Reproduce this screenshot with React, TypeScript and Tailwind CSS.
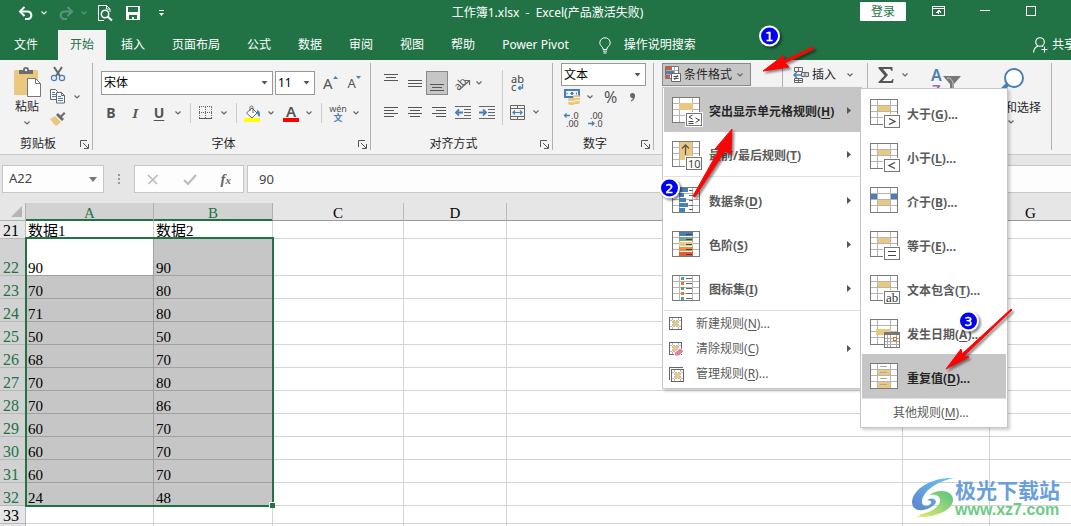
import { Fragment } from "react";
import type { ReactNode } from "react";

const uiFont = "font-['Noto_Sans','Noto_Sans_CJK_SC',sans-serif]";
const cellFont = "font-['Liberation_Serif','Noto_Sans_CJK_SC',serif]";

/* ---------- data ---------- */
const tabs = ["插入", "页面布局", "公式", "数据", "审阅", "视图", "帮助", "Power Pivot"];

const rows: [number, string, string][] = [
  [21, "数据1", "数据2"],
  [22, "90", "90"],
  [23, "70", "80"],
  [24, "71", "80"],
  [25, "50", "50"],
  [26, "68", "70"],
  [27, "70", "80"],
  [28, "70", "86"],
  [29, "60", "70"],
  [30, "60", "70"],
  [31, "60", "70"],
  [32, "24", "48"],
  [33, "", ""],
  [34, "", ""],
];

/* ---------- small shared pieces ---------- */
function Svg({
  w,
  h,
  children,
  crisp,
}: {
  w: number;
  h: number;
  children: ReactNode;
  crisp?: boolean;
}) {
  return (
    <svg
      width={w}
      height={h}
      viewBox={`0 0 ${w} ${h}`}
      fill="none"
      className="block shrink-0 overflow-visible"
      shapeRendering={crisp ? "crispEdges" : undefined}
      aria-hidden="true"
    >
      {children}
    </svg>
  );
}

function Chevron({ color = "#666" }: { color?: string }) {
  return (
    <Svg w={6} h={4}>
      <path d="M.5.5 3 3 5.5.5" stroke={color} strokeWidth="1.2" />
    </Svg>
  );
}

function Down({ color = "#555" }: { color?: string }) {
  return (
    <Svg w={7} h={4}>
      <path d="M.5 0h6L3.500 3.500z" fill={color} />
    </Svg>
  );
}

function IconButton({
  label,
  children,
  className = "",
}: {
  label: string;
  children: ReactNode;
  className?: string;
}) {
  return (
    <button
      type="button"
      aria-label={label}
      className={`flex h-6 shrink-0 items-center justify-center ${className}`}
    >
      {children}
    </button>
  );
}

function Group({
  label,
  launcher,
  className,
  children,
}: {
  label?: string;
  launcher?: boolean;
  className: string;
  children: ReactNode;
}) {
  return (
    <section
      className={`flex h-[87px] shrink-0 flex-col border-r border-[#b1b1b1] ${className}`}
    >
      <div className="flex-1">{children}</div>
      <div className="flex h-3 items-center">
        <span className={`flex-1 text-center leading-3 ${launcher ? "pr-1" : ""}`}>
          {label}
        </span>
        {launcher && (
          <button type="button" aria-label={`${label}设置`} className="mr-[3px]">
            <Svg w={9} h={9}>
              <path d="M.5 7V.5H7M3 3l5 5M8.500 4v4.500H4" stroke="#555" />
            </Svg>
          </button>
        )}
      </div>
    </section>
  );
}

function AlignLines({ lines }: { lines: [number, number][] }) {
  return (
    <Svg w={14} h={lines.length * 3 - 2} crisp>
      {lines.map(([x, w], i) => (
        <rect key={i} x={x} y={i * 3} width={w} height="1" fill="#555" />
      ))}
    </Svg>
  );
}

const barWide: [number, number][] = [[0, 14], [0, 14], [0, 14]];
const barTop: [number, number][] = [[0, 14], [2, 10], [0, 14]];

/* ---------- title bar ---------- */
function TitleBar() {
  return (
    <header className="flex h-[30px] shrink-0 items-start text-white">
      <div className="flex h-[26px] w-[235px] shrink-0 items-center pl-[18px]">
        <button type="button" aria-label="撤消" className="mr-[7px]">
          <Svg w={16} h={15}>
            <path d="M2 5.500h8a4 3.800 0 0 1 0 7.500H7" stroke="#fff" strokeWidth="2" />
            <path d="M6.500 1 2 5.500 6.500 10" stroke="#fff" strokeWidth="2" />
          </Svg>
        </button>
        <Chevron color="#fff" />
        <button type="button" aria-label="恢复" className="mr-[7px] ml-[11px]">
          <Svg w={16} h={15}>
            <path d="M14 5.500H6A4 3.800 0 0 0 6 13h3" stroke="#57967a" strokeWidth="2" />
            <path d="M9.500 1 14 5.500 9.500 10" stroke="#57967a" strokeWidth="2" />
          </Svg>
        </button>
        <Chevron color="#57967a" />
        <button type="button" aria-label="打印预览" className="ml-[11px]">
          <Svg w={15} h={17}>
            <path d="M6 15.500H.500V.500h8l3.500 3.500v3M8.500.500V4H12" stroke="#fff" />
            <circle cx="7" cy="9" r="3.700" stroke="#fff" strokeWidth="1.500" />
            <path d="m9.500 11.500 4.500 4" stroke="#fff" strokeWidth="2" />
          </Svg>
        </button>
        <button type="button" aria-label="保存" className="ml-[13px]">
          <Svg w={14} h={14} crisp>
            <path
              fillRule="evenodd"
              d="M0 0h14v14H0zM2 1v5h10V1zM3 9v4h3v-2h2v2h3V9z"
              fill="#fff"
            />
          </Svg>
        </button>
        <button type="button" aria-label="自定义快速访问工具栏" className="ml-[19px]">
          <Svg w={5} h={7}>
            <path d="M0 .5h5" stroke="#fff" />
            <path d="M0 3h5L2.500 6z" fill="#fff" />
          </Svg>
        </button>
      </div>
      <h1 className="flex-1 text-center leading-[26px] font-normal whitespace-pre">
        工作簿1.xlsx  -  Excel(产品激活失败)
      </h1>
      <div className="flex w-[211px] shrink-0 items-start pt-[2px]">
        <button
          type="button"
          className="h-[19px] w-[46px] rounded-[1px] bg-white leading-[19px] text-[#217346]"
        >
          登录
        </button>
        <button type="button" aria-label="功能区显示选项" className="mt-1 ml-[26px]">
          <Svg w={13} h={10} crisp>
            <path d="M.5.5h12v9H.5zM.5 2.500h12M6.500 8V4" stroke="#fff" />
            <path d="M4 6h1V5h1V4h1v1h1v1h1" stroke="#fff" />
          </Svg>
        </button>
        <button type="button" aria-label="最小化" className="mt-2 ml-[35px]">
          <Svg w={10} h={1} crisp>
            <rect width="10" height="1" fill="#fff" />
          </Svg>
        </button>
        <button type="button" aria-label="最大化" className="mt-1 ml-9">
          <Svg w={10} h={10} crisp>
            <rect x=".5" y=".5" width="9" height="9" stroke="#fff" />
          </Svg>
        </button>
      </div>
    </header>
  );
}

function TabRow() {
  return (
    <nav className="flex h-[30px] shrink-0 items-center gap-[3px] text-white">
      <button type="button" className="h-full w-[55px] shrink-0 pr-[3px] text-center leading-[28px]">
        文件
      </button>
      <button
        type="button"
        className="h-full shrink-0 bg-[#f3f3f3] px-3 leading-[28px] text-[#217346]"
      >
        开始
      </button>
      {tabs.map((t) => (
        <button key={t} type="button" className="h-full shrink-0 px-3 leading-[28px]">
          {t}
        </button>
      ))}
      <button type="button" className="ml-[15px] flex h-full shrink-0 items-center gap-[13px]">
        <Svg w={12} h={17}>
          <path
            d="M4 12.500V11C3 9.500.8 8.300.8 5.800A5.100 5.100 0 0 1 6 .8a5.100 5.100 0 0 1 5.200 5c0 2.500-2.200 3.700-3.200 5.200v1.500zM4 14.200h4M4.500 16h3"
            stroke="#fff"
          />
        </Svg>
        <span className="leading-[28px]">操作说明搜索</span>
      </button>
      <button
        type="button"
        className="mr-[-5px] ml-auto flex h-full shrink-0 items-center gap-1 leading-[28px]"
      >
        <Svg w={15} h={16}>
          <circle cx="7" cy="5" r="4.300" stroke="#fff" strokeWidth="1.100" />
          <path d="M.6 15.500C.8 12 3 9.800 5 9.300M9 9l1 .6M11.500 9.500v6M8.500 12.500h6" stroke="#fff" strokeWidth="1.100" />
        </Svg>
        共享
      </button>
    </nav>
  );
}

/* ---------- ribbon groups ---------- */
function ClipboardGroup() {
  return (
    <Group label="剪贴板" launcher className="w-[93px]">
      <div className="flex pt-[3px]">
        <button type="button" className="ml-[13px] flex w-7 flex-col items-center">
          <Svg w={28} h={31}>
            <rect x="1" y="4" width="24" height="25" rx="1" fill="#ecc77f" />
            <path d="M6 8V4h4c0-2 1-3 3-3s3 1 3 3h4v4z" fill="#6b6b6b" />
            <circle cx="13" cy="4" r="1.200" fill="#f3f3f3" />
            <path d="M14.500 12.500h8l5 5v13h-13z" fill="#fff" stroke="#777" />
            <path d="M22.500 12.500v5h5" stroke="#777" />
          </Svg>
          <span className="mt-[2px] leading-4 whitespace-nowrap">粘贴</span>
          <span className="mt-[6px]">
            <Chevron />
          </span>
        </button>
        <div className="ml-[9px] flex flex-col gap-[7px]">
          <button type="button" aria-label="剪切">
            <Svg w={16} h={16}>
              <path d="m4 1 6 9M12 1l-6 9" stroke="#666" strokeWidth="2" />
              <circle cx="4" cy="12" r="2.600" stroke="#4a7fb5" strokeWidth="1.300" />
              <circle cx="12" cy="12" r="2.600" stroke="#4a7fb5" strokeWidth="1.300" />
            </Svg>
          </button>
          <button type="button" aria-label="复制" className="flex items-center gap-2">
            <Svg w={16} h={15}>
              <path d="M.5.500h5l2 2V10.500h-7z" fill="#fff" stroke="#666" />
              <path d="M2 3.500h3M2 5.500h4M2 7.500h4" stroke="#4a7fb5" />
              <path d="M6.500 3.500h5l3 3v7.500h-8z" fill="#fff" stroke="#666" />
              <path d="M11.500 3.500v3h3" stroke="#666" />
              <path d="M8 7.500h3M8 9.500h5M8 11.500h5" stroke="#4a7fb5" />
            </Svg>
            <Chevron />
          </button>
          <button type="button" aria-label="格式刷">
            <Svg w={16} h={15}>
              <path d="m5 5 6 6-4 3.500H5L0 8z" fill="#ecc77f" />
              <path d="m6 4 6 6 2-2-2-2 3.500-3.500L14 1l-3.500 3.500L8 2z" fill="#6b6b6b" />
            </Svg>
          </button>
        </div>
      </div>
    </Group>
  );
}

function SelectBox({
  label,
  value,
  className,
}: {
  label: string;
  value: string;
  className: string;
}) {
  return (
    <div className={`grid shrink-0 items-center border border-[#999] bg-white ${className}`}>
      <select
        aria-label={label}
        defaultValue={value}
        className="col-start-1 row-start-1 h-full w-full appearance-none pl-[2px] text-black outline-none"
      >
        <option>{value}</option>
      </select>
      <span className="pointer-events-none col-start-1 row-start-1 mr-1 justify-self-end">
        <Down />
      </span>
    </div>
  );
}

const divider = <span className="h-5 w-px shrink-0 bg-[#ccc]" />;

function FontGroup() {
  return (
    <Group label="字体" launcher className="w-[278px]">
      <div className="flex h-8 items-end pl-2">
        <SelectBox label="字体" value="宋体" className="h-6 w-[172px]" />
        <SelectBox label="字号" value="11" className="ml-[2px] h-6 w-10" />
        <IconButton label="增大字号" className="ml-2">
          <span className="text-[15px] leading-6 text-[#555]">A</span>
          <Svg w={5} h={14}>
            <path d="M0 3h5L2.500 0z" fill="#4a7fb5" />
          </Svg>
        </IconButton>
        <IconButton label="减小字号" className="ml-[10px]">
          <span className="text-[13px] leading-6 text-[#555]">A</span>
          <Svg w={5} h={14}>
            <path d="M0 0h5L2.500 3z" fill="#4a7fb5" />
          </Svg>
        </IconButton>
      </div>
      <div className="mt-[6px] flex items-center pl-[11px] text-sm text-[#555]">
        <IconButton label="加粗" className="w-[14px] font-bold">B</IconButton>
        <IconButton label="倾斜" className="ml-[10px] w-[14px] font-['Noto_Serif','DejaVu_Serif',serif] text-[13px] font-bold italic">
          I
        </IconButton>
        <IconButton label="下划线" className="ml-[10px] w-[14px] font-bold underline underline-offset-2">
          U
        </IconButton>
        <span className="mr-[9px] ml-[9px]"><Chevron /></span>
        {divider}
        <IconButton label="边框" className="ml-2">
          <Svg w={13} h={14} crisp>
            <path d="M.5.500V12M12.500.500V12M0 .500h13M6.500 1v11M0 6.500h13" stroke="#666" strokeDasharray="1 1" />
            <path d="M0 12.500h13" stroke="#555" />
          </Svg>
        </IconButton>
        <span className="mr-[9px] ml-[9px]"><Chevron /></span>
        {divider}
        <IconButton label="填充颜色" className="ml-[7px]">
          <Svg w={17} h={17}>
            <path d="m8 3 5 5-5 5-5.500-5z" fill="#fff" stroke="#666" />
            <path d="M6 6V2.500C6 .500 9 .500 9 2.500V8" stroke="#666" />
            <path d="M13 5c3 1 3.500 4 2.500 7-1-1-2-2-2.500-4z" fill="#4a7fb5" />
            <path d="M0 13h16v4H0z" fill="#ff0" />
          </Svg>
        </IconButton>
        <span className="ml-[7px]"><Chevron /></span>
        <IconButton label="字体颜色" className="ml-[9px] w-4 flex-col">
          <span className="text-[15px] leading-[13px] font-semibold">A</span>
          <span className="h-1 w-4 bg-[#f00]" />
        </IconButton>
        <span className="mr-[9px] ml-[7px]"><Chevron /></span>
        {divider}
        <IconButton label="拼音指南" className="ml-2 w-4 flex-col">
          <span className="text-[9px] leading-[9px]">wén</span>
          <span className="text-[9px] leading-[9px] font-bold text-[#4a7fb5]">文</span>
        </IconButton>
        <span className="ml-[7px]"><Chevron /></span>
      </div>
    </Group>
  );
}

function Indent({ flip }: { flip?: boolean }) {
  return (
    <Svg w={16} h={13}>
      <path d="M0 .500h16M9 3.500h7M9 6.500h7M9 9.500h7M0 12.500h16" stroke="#666" />
      <path
        d={flip ? "M0 6.500h6M4 3.500l3 3-3 3" : "M2 6.500h6M4 3.500l-3 3 3 3"}
        stroke="#4a7fb5"
        strokeWidth="1.800"
      />
    </Svg>
  );
}

function AlignGroup() {
  return (
    <Group label="对齐方式" launcher className="w-[182px]">
      <div className="flex pt-[7px] pl-[7px]">
        <div className="w-[125px] border-r border-[#ccc]">
          <div className="flex h-[26px] items-center">
            <IconButton label="顶端对齐" className="w-6 items-start pt-[3px] pl-[2px]">
              <AlignLines lines={barTop} />
            </IconButton>
            <IconButton label="垂直居中" className="w-6 pl-[2px]">
              <AlignLines lines={barWide} />
            </IconButton>
            <IconButton
              label="底端对齐"
              className="w-[22px] items-end border border-[#8a8a8a] bg-[#c6c6c6] pb-[3px]"
            >
              <AlignLines lines={barTop} />
            </IconButton>
            <IconButton label="方向" className="ml-[6px]">
              <Svg w={17} h={16}>
                <text x="0" y="12" fontSize="11" fill="#555" transform="rotate(-45 7 9)">
                  ab
                </text>
                <path d="m5 15 10-9M11 5.500h4.500V10" stroke="#666" strokeWidth="1.200" />
              </Svg>
            </IconButton>
            <span className="ml-[5px]"><Chevron /></span>
          </div>
          <div className="mt-[3px] flex h-[26px] items-center">
            <IconButton label="左对齐" className="w-6 pl-[2px]">
              <AlignLines lines={[[0, 14], [0, 10], [0, 14], [0, 10]]} />
            </IconButton>
            <IconButton label="居中" className="w-6 pl-[2px]">
              <AlignLines lines={[[0, 14], [2, 10], [0, 14], [2, 10]]} />
            </IconButton>
            <IconButton label="右对齐" className="w-6 pl-[2px]">
              <AlignLines lines={[[0, 14], [4, 10], [0, 14], [4, 10]]} />
            </IconButton>
            <IconButton label="减少缩进量" className="ml-[5px]">
              <Indent />
            </IconButton>
            <IconButton label="增加缩进量" className="ml-2">
              <Indent flip />
            </IconButton>
          </div>
        </div>
        <div className="pl-[7px]">
          <IconButton label="自动换行" className="h-[26px]">
            <Svg w={14} h={17}>
              <text x="1" y="8" fontSize="11" fill="#444">ab</text>
              <text x="1" y="16" fontSize="11" fill="#444">c</text>
              <path d="M12.500 9v4H9M10.500 11 8.500 13l2 2" stroke="#4a7fb5" strokeWidth="1.300" />
            </Svg>
          </IconButton>
          <IconButton label="合并后居中" className="mt-[3px] h-[26px] gap-[8px]">
            <Svg w={15} h={15}>
              <path d="M.5.500h14v14H.500zM.500 3.500h14M.500 11.500h14M7.500.500v3M7.500 11.500v3" stroke="#666" />
              <path d="M3 7.500h9M5 5.500l-2 2 2 2M10 5.500l2 2-2 2" stroke="#4a7fb5" strokeWidth="1.200" />
            </Svg>
            <Chevron />
          </IconButton>
        </div>
      </div>
    </Group>
  );
}

function NumberGroup() {
  return (
    <Group label="数字" launcher className="w-[101px]">
      <div className="pl-2">
        <SelectBox label="数字格式" value="文本" className="h-[23px] w-[85px]" />
        <div className="flex h-[22px] items-center pl-[3px] text-[#555]">
          <IconButton label="会计数字格式" className="gap-[6px]">
            <Svg w={17} h={16}>
              <path d="M1 1h14v7H1z" fill="#f3f3f3" stroke="#4a7fb5" strokeWidth="2" />
              <path d="M6.500 4.500 8 3l1.500 1.500L8 6zM3 3.500v2M12.500 3.500v2" fill="#4a7fb5" stroke="#4a7fb5" />
              <rect x="9" y="6" width="7" height="9" rx="2" fill="#ecc77f" />
              <rect x="4" y="9" width="7" height="7" rx="2" fill="#ecc77f" />
              <path d="M10 8.500h6M11 11.500h5M4 12.500h7" stroke="#f3f3f3" />
            </Svg>
            <Chevron />
          </IconButton>
          <IconButton label="百分比样式" className="ml-[11px] text-base">%</IconButton>
          <IconButton label="千位分隔样式" className="ml-[13px]">
            <Svg w={6} h={9}>
              <path d="M0 2.500a2.500 2.500 0 1 1 5 0C5.200 5.500 3.500 7.500 1 8.500L.8 7.300C2.200 6.600 2.800 5.800 2.800 5 1.200 5.200 0 4.200 0 2.500z" fill="#666" />
            </Svg>
          </IconButton>
        </div>
        <div className="flex h-[22px] items-center gap-2 pl-[3px]">
          {[false, true].map((dec) => (
            <IconButton key={String(dec)} label={dec ? "减少小数位数" : "增加小数位数"}>
              <Svg w={16} h={15}>
                <text x={dec ? 2 : 7} y="7" fontSize="9" fill="#444">{dec ? ".00" : ".0"}</text>
                <text x={dec ? 7 : 2} y="15" fontSize="9" fill="#444">{dec ? ".0" : ".00"}</text>
                <path
                  d={dec ? "M0 11.500h6M4 9.500l2 2-2 2" : "M0 3.500h6M2.500 1.500l-2 2 2 2"}
                  stroke="#4a7fb5"
                  strokeWidth="1.300"
                />
              </Svg>
            </IconButton>
          ))}
        </div>
      </div>
    </Group>
  );
}

function StylesGroup() {
  return (
    <Group className="w-[129px]">
      <div className="relative ml-2 w-max">
        <button
          type="button"
          aria-haspopup="menu"
          aria-expanded="true"
          className="flex h-[23px] w-[89px] items-center border border-[#8a8a8a] bg-[#c6c6c6] pl-[2px]"
        >
          <Svg w={17} h={17}>
            <path d="M.5.500h13v12H.500z" fill="#fff" stroke="#777" />
            <path d="M1 1h6v3H1zM1 9h4v3H1z" fill="#d9573a" />
            <path d="M1 5h8v3H1z" fill="#4a7fb5" />
            <path d="M1 4.500h12M1 8.500h12M9.500 1v11" stroke="#aaa" />
            <path d="M6.500 7.500h9v8h-9z" fill="#fff" stroke="#666" />
            <path d="M8.500 10.500h5M8.500 12.500h5M12.500 9l-3 5" stroke="#555" />
          </Svg>
          <span className="mr-[5px] ml-[2px] leading-5">条件格式</span>
          <Chevron />
        </button>
        <FormatMenu />
      </div>
    </Group>
  );
}

function CellsGroup() {
  return (
    <Group className="w-[85px]">
      <button type="button" className="ml-[10px] flex h-[23px] items-center">
        <Svg w={17} h={16}>
          <path d="M1.500.500h8v4h-8zM5.500.500v4M1.500 11.500h8v4h-8zM5.500 11.500v4M1.500 13.500h8" stroke="#666" />
          <path d="M8.500 5.500h7v4h-7z" fill="#c6d6e8" stroke="#666" />
          <path d="M12 5.500v4" stroke="#666" />
          <path d="M1 8h7M4 5 1 8l3 3" stroke="#4a7fb5" strokeWidth="1.500" />
        </Svg>
        <span className="mr-[11px] ml-[2px] leading-5">插入</span>
        <Chevron />
      </button>
    </Group>
  );
}

function EditGroup() {
  return (
    <Group className="w-[184px]">
      <div className="flex items-start">
        <IconButton label="自动求和" className="ml-[10px] gap-2">
          <Svg w={16} h={16}>
            <path d="M.500 0h14v4h-1c-.300-1.500-1-2-3-2H5l5 6-5.500 6h7c2 0 2.500-.500 3-2h1l-.500 4H.500v-1L6.500 8.500.500 1.500z" fill="#555" />
          </Svg>
          <Chevron />
        </IconButton>
        <button type="button" aria-label="排序和筛选" className="ml-[23px] pt-1">
          <Svg w={30} h={34}>
            <text x="0" y="14" fontSize="16" fontWeight="600" fill="#4a7fb5">A</text>
            <text x="1" y="28" fontSize="15" fontWeight="600" fill="#9b62b8">Z</text>
            <path d="M12 9h18l-7 8v12l-4-3v-9z" fill="#777" />
            <path d="M16 11h3l3 4v8" stroke="#c8c8c8" />
          </Svg>
        </button>
        <button type="button" className="ml-5 flex flex-col items-center pt-[5px]">
          <Svg w={30} h={26}>
            <circle cx="18" cy="10" r="9" fill="#fff" stroke="#4a7fb5" strokeWidth="2" />
            <path d="m12 16-7 7" stroke="#4a7fb5" strokeWidth="4" />
          </Svg>
          <span className="mt-1 leading-5">查找和选择</span>
          <span className="mt-[2px]"><Chevron /></span>
        </button>
      </div>
    </Group>
  );
}

/* ---------- menu icons ---------- */
type BadgeKind = "rules" | "ten" | "gt" | "lt" | "eq" | "ab" | "date";

function SheetIcon({
  fills,
  badge,
  children,
}: {
  fills: [number, number, number, number, string][];
  badge?: BadgeKind;
  children?: ReactNode;
}) {
  // the badge hangs out below the 26px sheet
  return (
    <Svg w={31} h={26} crisp>
      <path d="M.5.500h27v25H.500z" fill="#fff" />
      <path d="M7.500 1v24M20.500 1v24M1 6.500h26M1 12.500h26M1 18.500h26" stroke="#b5b5b5" />
      {fills.map(([x, y, w, h, c]) => (
        <rect key={`${x}-${y}`} x={x} y={y} width={w} height={h} fill={c} />
      ))}
      <path d="M.5.500h27v25H.500z" stroke="#7a7a7a" />
      {children}
      {badge && badge !== "date" && (
        <>
          <path d="M13 15h18v15H13z" fill="#fff" />
          <path d="M14.500 16.500h15v12h-15z" fill="#fff" stroke="#777" />
        </>
      )}
      <g shapeRendering="auto" stroke="#444">
        {badge === "gt" && <path d="m19 19.500 6 3-6 3" strokeWidth="1.300" />}
        {badge === "lt" && <path d="m25 19.500-6 3 6 3" strokeWidth="1.300" />}
        {badge === "eq" && <path d="M18 20.500h8M18 24.500h8" />}
        {badge === "rules" && (
          <path d="m20.500 18-3.500 2 3.500 2M16.500 24.500h5M16.500 26.500h5M23.500 21l4 2-4 2.500" />
        )}
      </g>
      {badge === "ten" && (
        <text x="16" y="27" fontSize="11" fontWeight="400" fill="#444">10</text>
      )}
      {badge === "ab" && (
        <text
          x="16"
          y="27"
          fontSize="13"
          fontWeight="400"
          fill="#333"
          className="font-['Liberation_Serif',serif]"
        >
          ab
        </text>
      )}
      {badge === "date" && (
        <>
          <path d="M14.500 13.500h15v15h-15z" fill="#fff" stroke="#777" />
          <path d="M14 13h16v3H14z" fill="#777" />
          <path d="M17.500 16v12M20.500 16v12M26.500 16v12M15 19.500h14M15 22.500h14M15 25.500h14" stroke="#aaa" />
          <path d="M23.500 18.500h3v3h-3z" fill="#fff" stroke="#dd6b20" />
        </>
      )}
    </Svg>
  );
}

const gold = "#ecc77f";
const blue = "#4a7fb5";

const barsIcon = (
  <SheetIcon
    fills={[
      [7, 1, 9, 4, blue],
      [7, 6, 5, 4, blue],
      [7, 11, 7, 4, blue],
      [7, 16, 9, 4, blue],
      [7, 21, 6, 4, blue],
    ]}
  >
    <path d="M17 3.500h4M17 8.500h4M17 13.500h4M17 18.500h4M17 22.500h4" stroke="#666" />
  </SheetIcon>
);

const scaleIcon = (
  <SheetIcon
    fills={[
      [7, 1, 14, 4, blue],
      [7, 6, 14, 4, "#73a794"],
      [7, 11, 14, 4, gold],
      [7, 16, 14, 4, "#e8903f"],
      [7, 21, 14, 4, "#dc5f3d"],
    ]}
  >
    <path d="M14 3.500h6M14 8.500h6M14 13.500h6M14 18.500h6M14 23.500h6" stroke="#444" />
  </SheetIcon>
);

const setIcon = (
  <SheetIcon fills={[]}>
    {["#5aa08a", "#e07b2e", "#5aa08a", "#e07b2e", "#5aa08a"].map((c, i) => (
      <Fragment key={i}>
        <rect x="9" y={2 + i * 5} width="3" height="3" fill={c} />
        <path d={`M14 ${3.5 + i * 5}h6`} stroke="#666" />
      </Fragment>
    ))}
  </SheetIcon>
);

function RuleIcon({ kind }: { kind: "new" | "clear" | "manage" }) {
  const o = kind === "manage" ? 2 : 0;
  return (
    <Svg w={16} h={14} crisp>
      {kind === "manage" && <path d="M.5 13V.500H14" stroke="#666" />}
      <g transform={`translate(${o} ${o})`}>
        <path d="M.5.500h12v12H.500z" fill="#fff" stroke="#666" />
        <path d="M3.500 1v11M9.500 1v11M1 3.500h11M1 9.500h11" stroke="#bbb" strokeDasharray="2 1" />
        <rect x="4" y="4" width="5" height="5" fill={gold} />
      </g>
      {kind === "clear" && (
        <path d="m11 6 4 3-5 5H6l-1-3z" fill="#e5839a" stroke="#fff" shapeRendering="auto" />
      )}
    </Svg>
  );
}

/* ---------- menus ---------- */
const midCell: [number, number, number, number, string] = [8, 7, 12, 5, gold];

const formatItems = [
  {
    text: "突出显示单元格规则",
    key: "H",
    icon: <SheetIcon fills={[[7, 6, 14, 7, gold]]} badge="rules" />,
  },
  {
    text: "最前/最后规则",
    key: "T",
    icon: (
      <SheetIcon fills={[[8, 1, 12, 18, gold]]} badge="ten">
        <path d="M13.500 14V4M10 7.500 13.500 4 17 7.500" stroke="#555" shapeRendering="auto" strokeWidth="1.300" />
      </SheetIcon>
    ),
  },
  { text: "数据条", key: "D", icon: barsIcon },
  { text: "色阶", key: "S", icon: scaleIcon },
  { text: "图标集", key: "I", icon: setIcon },
];

const ruleItems = [
  { text: "新建规则", key: "N", kind: "new" as const, dots: true },
  { text: "清除规则", key: "C", kind: "clear" as const, dots: false },
  { text: "管理规则", key: "R", kind: "manage" as const, dots: true },
];

const highlightItems = [
  { text: "大于", key: "G", icon: <SheetIcon fills={[midCell]} badge="gt" /> },
  { text: "小于", key: "L", icon: <SheetIcon fills={[midCell]} badge="lt" /> },
  {
    text: "介于",
    key: "B",
    icon: (
      <SheetIcon
        fills={[
          [1, 7, 6, 5, blue],
          [21, 7, 6, 5, blue],
          [8, 13, 12, 5, gold],
        ]}
      />
    ),
  },
  { text: "等于", key: "E", icon: <SheetIcon fills={[midCell]} badge="eq" /> },
  { text: "文本包含", key: "T", icon: <SheetIcon fills={[midCell]} badge="ab" /> },
  {
    text: "发生日期",
    key: "A",
    icon: <SheetIcon fills={[[6, 10, 15, 6, gold]]} badge="date" />,
  },
  {
    text: "重复值",
    key: "D",
    icon: (
      <SheetIcon
        fills={[
          [8, 7, 12, 5, gold],
          [8, 19, 12, 6, gold],
        ]}
      >
        <path d="M10 3.500h7M10 9.500h7M10 15.500h7M10 21.500h7" stroke="#aaa" />
      </SheetIcon>
    ),
  },
];

function Accel({ text, k, dots }: { text: string; k: string; dots?: boolean }) {
  return (
    <span className="leading-4 whitespace-nowrap">
      {text}(<u className="underline-offset-2">{k}</u>){dots && "..."}
    </span>
  );
}

function SubArrow() {
  return (
    <span className="mr-[9px] ml-auto">
      <Svg w={4} h={7}>
        <path d="M0 0v7l4-3.500z" fill="#555" />
      </Svg>
    </span>
  );
}

function FormatMenu() {
  return (
    <div
      role="menu"
      className="absolute top-6 left-0 z-10 w-[200px] border border-[#c6c6c6] bg-white px-px pb-[2px] shadow-[2px_2px_3px_rgba(0,0,0,0.2)]"
    >
      {formatItems.map((it, i) => (
        <Fragment key={it.key}>
          <button
            type="button"
            role="menuitem"
            className={`flex h-[44px] w-full items-center pl-2 font-bold ${
              i === 0 ? "bg-[#c6c6c6] text-[#262626]" : "text-[#5a5a5a]"
            }`}
          >
            {it.icon}
            <span className="mt-1 ml-[6px]">
              <Accel text={it.text} k={it.key} />
            </span>
            <SubArrow />
          </button>
          {i === 1 && <div className="mb-px h-px bg-[#e1e1e1]" />}
        </Fragment>
      ))}
      <div className="h-px bg-[#e1e1e1]" />
      {ruleItems.map((it) => (
        <button
          key={it.key}
          type="button"
          role="menuitem"
          className="flex h-[25px] w-full items-center pl-[5px] text-[#5a5a5a]"
        >
          <RuleIcon kind={it.kind} />
          <span className="ml-[11px]">
            <Accel text={it.text} k={it.key} dots={it.dots} />
          </span>
          {it.kind === "clear" && <SubArrow />}
        </button>
      ))}
      <HighlightMenu />
    </div>
  );
}

function HighlightMenu() {
  return (
    <div
      role="menu"
      className="absolute top-0 left-[197px] w-[148px] border border-[#c6c6c6] bg-white p-px shadow-[2px_2px_3px_rgba(0,0,0,0.2)]"
    >
      {highlightItems.map((it) => (
        <button
          key={it.text}
          type="button"
          role="menuitem"
          className={`flex h-[44px] w-full items-center pl-2 font-bold ${
            it.text === "重复值" ? "bg-[#c6c6c6] text-[#262626]" : "text-[#5a5a5a]"
          }`}
        >
          {it.icon}
          <span className="mt-[6px] ml-[6px]">
            <Accel text={it.text} k={it.key} dots />
          </span>
        </button>
      ))}
      <button
        type="button"
        role="menuitem"
        className="flex h-[28px] w-full items-center border-t border-[#e1e1e1] pl-[31px] text-[#5a5a5a]"
      >
        <Accel text="其他规则" k="M" dots />
      </button>
    </div>
  );
}

/* ---------- formula bar ---------- */
function FormulaBar() {
  return (
    <div className="flex h-[49px] shrink-0 items-start border-t border-[#c8c8c8] bg-[#e6e6e6] pt-[10px] pl-[2px] text-[13px]">
      <div className="flex h-7 w-[102px] shrink-0 items-center border border-[#c6c6c6] bg-[#fdfdfd] pr-[6px]">
        <input
          aria-label="名称框"
          defaultValue="A22"
          className="w-0 flex-1 bg-transparent pl-[6px] text-[#444] outline-none"
        />
        <Svg w={8} h={5}>
          <path d="M0 0h8L4 5z" fill="#777" />
        </Svg>
      </div>
      <div className="flex h-7 w-[30px] shrink-0 items-center justify-center">
        <Svg w={2} h={10} crisp>
          <path d="M0 0h2v2H0zM0 4h2v2H0zM0 8h2v2H0z" fill="#999" />
        </Svg>
      </div>
      <div className="flex h-7 w-[110px] shrink-0 items-center justify-around border border-[#c6c6c6] bg-[#fdfdfd]">
        <button type="button" aria-label="取消">
          <Svg w={12} h={11}>
            <path d="m1 1 9 9M10.500 1l-9 9" stroke="#bbb" strokeWidth="1.600" />
          </Svg>
        </button>
        <button type="button" aria-label="输入">
          <Svg w={14} h={11}>
            <path d="m1 6 4 4 8-9" stroke="#bbb" strokeWidth="2" />
          </Svg>
        </button>
        <button
          type="button"
          aria-label="插入函数"
          className="font-['Liberation_Serif',serif] text-[15px] leading-4 font-bold text-[#666] italic"
        >
          f<span className="text-[11px]">x</span>
        </button>
      </div>
      <input
        aria-label="编辑栏"
        defaultValue="90"
        className="ml-[3px] h-7 min-w-0 flex-1 border border-r-0 border-[#c6c6c6] bg-[#fdfdfd] pl-[11px] text-[#444] outline-none"
      />
    </div>
  );
}

/* ---------- worksheet ---------- */
function rowHeight(n: number) {
  if (n === 21 || n === 33) return "h-[18px]";
  if (n === 22) return "h-[37px]";
  return "h-[23px]";
}

function Sheet() {
  return (
    <div className={`relative ${cellFont} text-[15px] text-black`}>
      <table className="w-full table-fixed border-separate border-spacing-0">
        <colgroup>
          <col className="w-[26px]" />
          <col className="w-[128px]" />
          <col className="w-[119px]" />
          <col className="w-[131px]" />
          <col className="w-[103px]" />
          <col className="w-[396px]" />
          <col className="w-[87px]" />
          <col />
        </colgroup>
        <thead>
          <tr className="h-[18px]">
            <th className="border-r border-b border-[#b1b1b1] bg-[#e6e6e6] p-0">
              <span className="flex justify-end pr-[3px]">
                <Svg w={11} h={11}>
                  <path d="M11 0v11H0z" fill="#b4b4b4" />
                </Svg>
              </span>
            </th>
            {["A", "B", "C", "D", "E", "F", "G"].map((c) => (
              <th
                key={c}
                scope="col"
                className={`border-r border-b p-0 align-bottom leading-[14px] font-normal ${
                  c === "A" || c === "B"
                    ? "border-r-[#b1b1b1] border-b-[#217346] bg-[#d2d2d2] text-[#217346] shadow-[inset_0_-1px_#217346]"
                    : "border-r-[#b9b9b9] border-b-[#999] bg-[#e6e6e6]"
                } ${c === "G" ? "border-r-0" : ""}`}
              >
                {c}
              </th>
            ))}
          </tr>
        </thead>
        <tbody>
          {rows.map(([n, a, b]) => {
            const selected = n >= 22 && n <= 32;
            return (
              <tr key={n} className={rowHeight(n)}>
                <th
                  scope="row"
                  className={`border-r border-b border-[#b9b9b9] p-0 pl-[3px] text-left align-bottom text-base leading-[14px] font-normal ${
                    selected ? "bg-[#d2d2d2] text-[#217346]" : "bg-[#e6e6e6]"
                  }`}
                >
                  {n < 34 ? n : ""}
                </th>
                {[a, b].map((v, i) => (
                  <td
                    key={i}
                    className={`border-r border-b p-0 pl-[2px] align-bottom leading-[14px] whitespace-nowrap ${
                      selected ? "border-[#a0a0a0]" : "border-[#d4d4d4]"
                    } ${selected && !(n === 22 && i === 0) ? "bg-[#c6c6c6]" : "bg-white"}`}
                  >
                    {v}
                  </td>
                ))}
                {[0, 1, 2, 3, 4].map((i) => (
                  <td
                    key={i}
                    className={`border-b border-[#d4d4d4] bg-white p-0 ${i < 4 ? "border-r" : ""}`}
                  />
                ))}
              </tr>
            );
          })}
        </tbody>
      </table>
      {/* selection frame and its fill handle */}
      <div className="pointer-events-none absolute top-[34px] left-[25px] h-[270px] w-[249px] border-2 border-[#217346]">
        <span className="absolute -right-[3px] -bottom-[3px] h-[6px] w-[6px] border-t border-l border-white bg-[#217346]" />
      </div>
    </div>
  );
}

/* ---------- overlays ---------- */
const steps = [
  { n: 1, x: 769, y: 36, arrow: "M763 71 784 55 783 61 813 47 814 49 785 63 789 67Z" },
  { n: 2, x: 669, y: 188, arrow: "M732 129 715 149 720 148 693 196 695 197 725 151 731 154Z" },
  { n: 3, x: 968, y: 321, arrow: "M946 369 961 349 962 354 1011 309 1012 310 964 356 969 357Z" },
];

function Annotations() {
  return (
    <svg
      width="1071"
      height="526"
      viewBox="0 0 1071 526"
      className="pointer-events-none absolute top-0 left-0 z-20 drop-shadow-[2px_2px_1px_rgba(0,0,0,0.45)]"
      aria-hidden="true"
    >
      {steps.map((s) => (
        <g key={s.n}>
          <circle cx={s.x + 0.5} cy={s.y} r="10.500" fill="#fff" />
          <circle cx={s.x + 0.5} cy={s.y} r="8.500" fill="#0000f5" />
          <text
            x={s.x + 0.5}
            y={s.y + 5}
            fontSize="13"
            textAnchor="middle"
            fill="#fff"
            stroke="#fff"
            strokeWidth=".4"
            className="font-['DejaVu_Sans',sans-serif]"
          >
            {s.n}
          </text>
          <path d={s.arrow} fill="#fa0505" stroke="#fa0505" strokeLinejoin="round" />
        </g>
      ))}
    </svg>
  );
}

function Watermark() {
  return (
    <div className="pointer-events-none absolute right-[11px] bottom-[7px] z-20 flex items-center">
      <svg width="44" height="42" viewBox="0 0 44 42" aria-hidden="true">
        <defs>
          <linearGradient id="wmBlue" x1="0" y1="1" x2="1" y2="0">
            <stop offset="0" stopColor="#5b84cf" />
            <stop offset="1" stopColor="#6cc6f2" />
          </linearGradient>
          <linearGradient id="wmGreen" x1="0" y1="1" x2="1" y2="0">
            <stop offset="0" stopColor="#e6ee6a" />
            <stop offset="1" stopColor="#55c084" />
          </linearGradient>
        </defs>
        <path
          d="M43 1C22 0 2 11 1 25c0 6 5 9 11 8 7-1 12-5 13-8 0-4-7-5-9-1 2-1 5 0 4 2-2 4-9 4-9-1C11 16 23 5 43 1z"
          fill="url(#wmBlue)"
        />
        <path
          d="M18 18c8-6 24-6 24 5 0 10-17 18-38 17 3 0 5-1 6-3l-4 1c13-2 21-7 23-13 1-6-4-8-11-7z"
          fill="url(#wmGreen)"
        />
      </svg>
      <div className="flex flex-col">
        <span className="text-[21px] leading-[24px] font-bold whitespace-nowrap text-[#6a9fdc]">
          极光下载站
        </span>
        <span className="font-['Liberation_Sans',sans-serif] text-base leading-4 font-bold text-[#6dcb86]">
          www.xz7.com
        </span>
      </div>
    </div>
  );
}

export default function App() {
  return (
    <div
      className={`relative flex h-screen flex-col overflow-hidden bg-white text-xs text-[#262626] ${uiFont}`}
    >
      <div className="bg-[#217346]">
        <TitleBar />
        <TabRow />
      </div>
      <div className="flex h-[94px] shrink-0 bg-[#f3f3f3] pt-[3px]">
        <ClipboardGroup />
        <FontGroup />
        <AlignGroup />
        <NumberGroup />
        <StylesGroup />
        <CellsGroup />
        <EditGroup />
      </div>
      <FormulaBar />
      <Sheet />
      <Annotations />
      <Watermark />
    </div>
  );
}
